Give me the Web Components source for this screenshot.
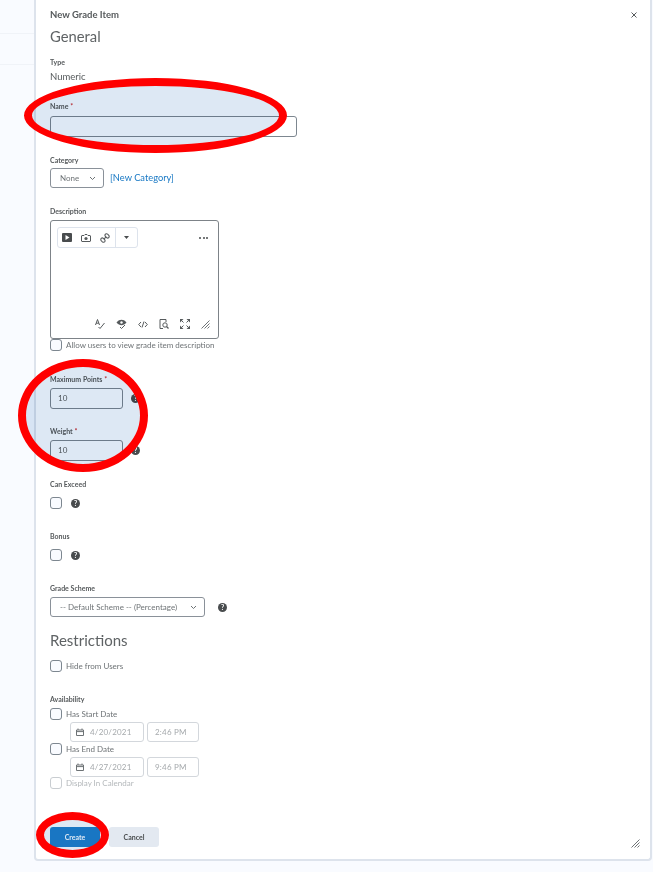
<!doctype html>
<html lang="en">
<head>
<meta charset="UTF-8">
<title>New Grade Item</title>
<style>
    html, body { margin: 0; height: 872px; overflow: hidden; background: #f9fbff; }
    body { font-family: Lato, "Open Sans", sans-serif; color: #494c4e; position: relative; }
</style>
</head>
<body>
<grade-page>
    <field-label style="margin-top:11px">Type</field-label>
    <plain-text style="margin-top:4px">Numeric</plain-text>

    <field-label style="margin-top:18px" required>Name</field-label>
    <text-input style="margin-top:5px;width:247px"></text-input>

    <field-label style="margin-top:18px">Category</field-label>
    <form-row style="margin-top:3px;height:20px" gap="6">
        <select-box style="width:54px">None</select-box>
        <a-link>[New Category]</a-link>
    </form-row>

    <field-label style="margin-top:18px">Description</field-label>
    <editor-box style="margin-top:4px"></editor-box>
    <check-row>Allow users to view grade item description</check-row>

    <field-label style="margin-top:23px" required>Maximum Points</field-label>
    <form-row style="margin-top:4px;height:21px" gap="8">
        <text-input style="width:73px" value="10"></text-input><help-icon></help-icon>
    </form-row>

    <field-label style="margin-top:17px" required>Weight</field-label>
    <form-row style="margin-top:4px;height:21px" gap="8">
        <text-input style="width:73px" value="10"></text-input><help-icon></help-icon>
    </form-row>

    <field-label style="margin-top:18px">Can Exceed</field-label>
    <form-row style="margin-top:8px;height:12px" gap="9">
        <check-row></check-row><help-icon></help-icon>
    </form-row>

    <field-label style="margin-top:22px">Bonus</field-label>
    <form-row style="margin-top:8px;height:12px" gap="9">
        <check-row></check-row><help-icon></help-icon>
    </form-row>

    <field-label style="margin-top:22px">Grade Scheme</field-label>
    <form-row style="margin-top:4px;height:20px" gap="13">
        <select-box style="width:155px">-- Default Scheme -- (Percentage)</select-box><help-icon></help-icon>
    </form-row>

    <section-title style="margin-top:13px">Restrictions</section-title>
    <check-row style="margin-top:10px">Hide from Users</check-row>

    <field-label style="margin-top:22px">Availability</field-label>
    <check-row style="margin-top:4px">Has Start Date</check-row>
    <date-row style="margin-top:2px" date="4/20/2021" time="2:46 PM"></date-row>
    <check-row style="margin-top:1px">Has End Date</check-row>
    <date-row style="margin-top:2px" date="4/27/2021" time="9:46 PM"></date-row>
    <check-row disabled>Display In Calendar</check-row>

    <form-row style="margin-top:38px;height:20px" gap="9">
        <action-button primary>Create</action-button>
        <action-button>Cancel</action-button>
    </form-row>
</grade-page>

<!-- hand drawn highlights that sit over the form -->
<mark-ellipse style="left:24px;top:78px;width:263px;height:75px"></mark-ellipse>
<mark-ellipse style="left:18px;top:359px;width:130px;height:113px"></mark-ellipse>
<mark-ellipse style="left:36px;top:812px;width:73px;height:46px"></mark-ellipse>

<script>
    function define(name, css, html, setup) {
        customElements.define(name, class extends HTMLElement {
            constructor() {
                super();
                this.attachShadow({mode: 'open'}).innerHTML = '<style>' + css + '</style>' + html;
            }
            connectedCallback() {
                if (setup) setup(this);
            }
        });
    }

    define('grade-page', `
        :host { display: grid; grid-template-columns: 34px 1fr; height: 872px; filter: blur(.3px); }
        .side { height: 65px; box-sizing: border-box; border-bottom: 1px solid #f0f3f8; }
        .side div { height: 34px; border-bottom: 1px solid #f0f3f8; box-sizing: border-box; }
        .dialog {
            width: 618px; height: 861px; box-sizing: border-box; background: #fff;
            border: 2px solid #dde3ec; border-top: 0; border-radius: 0 0 4px 4px;
            padding: 9px 14px 0; position: relative;
        }
        .top { font-size: 9.5px; font-weight: 700; line-height: 12px; color: #565a5c; }
        h2 { margin: 5px 0 0; font-size: 14.8px; font-weight: 400; line-height: 20px; color: #5f6365; }
        svg { position: absolute; }
        .close { right: 13px; top: 12px; }
        .grip { right: 10px; bottom: 11px; }
    `, `
        <div class="side"><div></div></div>
        <div class="dialog">
            <div class="top">New Grade Item</div>
            <svg class="close" width="6" height="6" viewBox="0 0 6 6"><path d="M.5 .5l5 5M5.500 .5l-5 5" stroke="#565a5c" stroke-width="1"/></svg>
            <h2>General</h2>
            <slot></slot>
            <svg class="grip" width="9" height="9" viewBox="0 0 9 9"><path d="M0.5 8.5L8.5 0.5M3.5 8.5L8.5 3.500M6.500 8.500L8.500 6.500" stroke="#6e7376" stroke-width="1"/></svg>
        </div>
    `);

    define('field-label', `
        :host { display: block; font-size: 7px; font-weight: 700; line-height: 10px; color: #565a5c; }
        .star { display: none; color: #cd2026; font-weight: 400; }
        :host([required]) .star { display: inline; }
    `, '<slot></slot><span class="star"> *</span>');

    define('plain-text', `
        :host { display: block; font-size: 9.5px; line-height: 12px; color: #565a5c; }
    `, '<slot></slot>');

    define('section-title', `
        :host { display: block; font-size: 15px; line-height: 20px; color: #5f6365; }
    `, '<slot></slot>');

    define('form-row', `
        :host { display: flex; align-items: center; gap: var(--gap, 6px); }
    `, '<slot></slot>', el => el.style.setProperty('--gap', el.getAttribute('gap') + 'px'));

    define('text-input', `
        :host {
            display: block; height: 21px; box-sizing: border-box; padding-left: 7px;
            border: 1px solid #7d8790; border-radius: 3px; background: #fff;
            font-size: 8px; line-height: 19px; color: #565a5c; letter-spacing: .2px;
        }
    `, '<span></span>', el => el.shadowRoot.querySelector('span').textContent = el.getAttribute('value') || '');

    define('select-box', `
        :host {
            display: flex; align-items: center; justify-content: space-between; height: 20px; box-sizing: border-box;
            padding: 0 7px 0 9px; border: 1px solid #8a9199; border-radius: 3px; background: #fff;
            font-size: 8px; color: #6e7376; white-space: nowrap;
        }
    `, '<slot></slot><svg width="7" height="5" viewBox="0 0 7 5"><path d="M1 1l2.500 2.500L6 1" fill="none" stroke="#6e7376" stroke-width="1"/></svg>');

    define('a-link', `
        :host { display: block; font-size: 9.3px; color: #1878c4; margin-top: -2px; }
    `, '<slot></slot>');

    define('help-icon', `
        :host { display: block; width: 9px; height: 9px; flex: none; }
        svg { display: block; }
        text { font: 700 7px Lato, sans-serif; fill: #fff; }
    `, '<svg width="9" height="9" viewBox="0 0 9 9"><circle cx="4.500" cy="4.500" r="4.500" fill="#494c4e"/><text x="4.500" y="7" text-anchor="middle">?</text></svg>');

    define('check-row', `
        :host { display: flex; align-items: center; gap: 4px; height: 12px; font-size: 8px; color: #6e7376; white-space: nowrap; }
        .box { width: 12px; height: 12px; box-sizing: border-box; border: 1px solid #7d8790; border-radius: 3px; background: #f9fbff; flex: none; }
        :host([disabled]) { color: #b4b8bb; }
        :host([disabled]) .box { border-color: #c9cdd1; background: #fff; }
    `, '<div class="box"></div><slot></slot>');

    define('date-row', `
        :host { display: flex; gap: 3px; margin-left: 20px; height: 20px; font-size: 8px; color: #a5a9ac; letter-spacing: .2px; }
        div { box-sizing: border-box; height: 20px; border: 1px solid #d3d7dc; border-radius: 3px; display: flex; align-items: center; }
        .d { width: 74px; padding-left: 5px; gap: 6px; }
        .t { width: 52px; padding-left: 7px; }
    `, `<div class="d"><svg width="8" height="8" viewBox="0 0 8 8"><path d="M.5 2h7v5.500h-7zM.5 3.600h7M2 .5v1.500M6 .5v1.500" fill="none" stroke="#6e7376" stroke-width="1"/></svg><span id="date"></span></div><div class="t" id="time"></div>`,
    el => {
        el.shadowRoot.getElementById('date').textContent = el.getAttribute('date');
        el.shadowRoot.getElementById('time').textContent = el.getAttribute('time');
    });

    define('editor-box', `
        :host {
            display: block; width: 169px; height: 119px; box-sizing: border-box; position: relative;
            border: 1px solid #7d8388; border-radius: 3px; background: #fff;
        }
        .tools { display: flex; justify-content: space-between; align-items: center; padding: 6px 10px 0 6px; }
        .group { display: flex; align-items: center; height: 21px; box-sizing: border-box; border: 1px solid #dde3ec; border-radius: 3px; }
        .group .main { display: flex; gap: 9px; align-items: center; padding: 0 5px 0 4px; height: 100%; border-right: 1px solid #dde3ec; }
        .group .more { width: 21px; display: flex; justify-content: center; }
        .dots { display: flex; gap: 1.5px; }
        .dots i { width: 2px; height: 2px; border-radius: 50%; background: #494c4e; }
        .bottom { position: absolute; right: 8px; bottom: 9px; display: flex; gap: 11px; align-items: center; }
        svg { display: block; }
    `, `
        <div class="tools">
            <div class="group">
                <div class="main">
                    <svg width="10" height="9" viewBox="0 0 10 9"><rect width="10" height="9" rx="1" fill="#494c4e"/><path d="M3.500 2l4 2.500-4 2.500z" fill="#fff"/></svg>
                    <svg width="10" height="8" viewBox="0 0 10 8"><path d="M1 1.500h2L4 .5h2l1 1h2a.6 .6 0 0 1 .5 .5V7a.6 .6 0 0 1-.5 .5H1a.6 .6 0 0 1-.5-.5V2a.6 .6 0 0 1 .5-.5z" fill="none" stroke="#565a5c"/><circle cx="5" cy="4.500" r="1.600" fill="#565a5c"/></svg>
                    <svg width="10" height="10" viewBox="0 0 10 10"><g fill="none" stroke="#565a5c" stroke-width="1.100"><path d="M5.200 3.200a1.600 1.600 0 0 1 0-1.800 1.700 1.700 0 0 1 2.400-.2l1.200 1.200a1.700 1.700 0 0 1-.2 2.400 1.600 1.600 0 0 1-1.800 0z"/><path d="M4.800 6.800a1.600 1.600 0 0 1 0 1.800 1.700 1.700 0 0 1-2.400 .2L1.200 7.600a1.700 1.700 0 0 1 .2-2.400 1.600 1.600 0 0 1 1.800 0z"/><path d="M3.800 6.200L6.200 3.800"/></g></svg>
                </div>
                <div class="more"><svg width="5" height="3" viewBox="0 0 5 3"><path d="M0 0h5L2.500 3z" fill="#494c4e"/></svg></div>
            </div>
            <div class="dots"><i></i><i></i><i></i></div>
        </div>
        <div class="bottom">
            <svg width="10" height="10" viewBox="0 0 10 10"><path d="M.5 6L2.500 .5 4.500 6M1.200 4.200h2.600M3.500 8l1.500 1.500L9.500 4" fill="none" stroke="#565a5c" stroke-width="1"/></svg>
            <svg width="11" height="10" viewBox="0 0 11 10"><path d="M.5 3.500C2 1.500 3.800 .8 5.500 .8s3.500 .7 5 2.700C9 5.500 7.200 6.200 5.500 6.200S2 5.500 .5 3.500z" fill="#565a5c"/><circle cx="5.500" cy="3.500" r="1.200" fill="#fff"/><path d="M4 8l1.500 1.500L9 6" fill="none" stroke="#565a5c" stroke-width="1"/></svg>
            <svg width="10" height="7" viewBox="0 0 10 7"><path d="M3 1L.7 3.500 3 6M7 1l2.300 2.500L7 6M6 .5L4 6.500" fill="none" stroke="#565a5c" stroke-width="1"/></svg>
            <svg width="10" height="10" viewBox="0 0 10 10"><path d="M7 3V.5H1v9h3" fill="none" stroke="#565a5c" stroke-width="1"/><circle cx="6" cy="6" r="2.200" fill="none" stroke="#565a5c" stroke-width="1"/><path d="M7.500 7.500l2 2" stroke="#565a5c" stroke-width="1.200"/></svg>
            <svg width="10" height="10" viewBox="0 0 10 10"><path d="M0 0h3.500L0 3.500zM10 0v3.500L6.500 0zM0 10V6.500L3.500 10zM10 10H6.500L10 6.500z" fill="#565a5c"/><path d="M1.500 1.500l2 2M8.500 1.500l-2 2M1.500 8.500l2-2M8.500 8.500l-2-2" stroke="#565a5c"/></svg>
            <svg width="9" height="9" viewBox="0 0 9 9"><path d="M0.500 8.500L8.500 0.500M3.500 8.500L8.500 3.500M6.500 8.500L8.500 6.500" stroke="#6e7376" stroke-width="1"/></svg>
        </div>
    `);

    define('action-button', `
        :host {
            display: flex; align-items: center; justify-content: center; width: 50px; height: 20px;
            border-radius: 3px; background: #e3e9f1; color: #494c4e; font-size: 7px; font-weight: 700;
        }
        :host([primary]) { background: #1c82cc; color: #fff; }
    `, '<slot></slot>');

    define('mark-ellipse', `
        :host {
            position: absolute; display: block; box-sizing: border-box;
            border: 8px solid #f00; border-radius: 50%;
        }
        .fill { height: 100%; border-radius: 50%; background: #dde8f4; mix-blend-mode: multiply; }
    `, '<div class="fill"></div>');
</script>
</body>
</html>
